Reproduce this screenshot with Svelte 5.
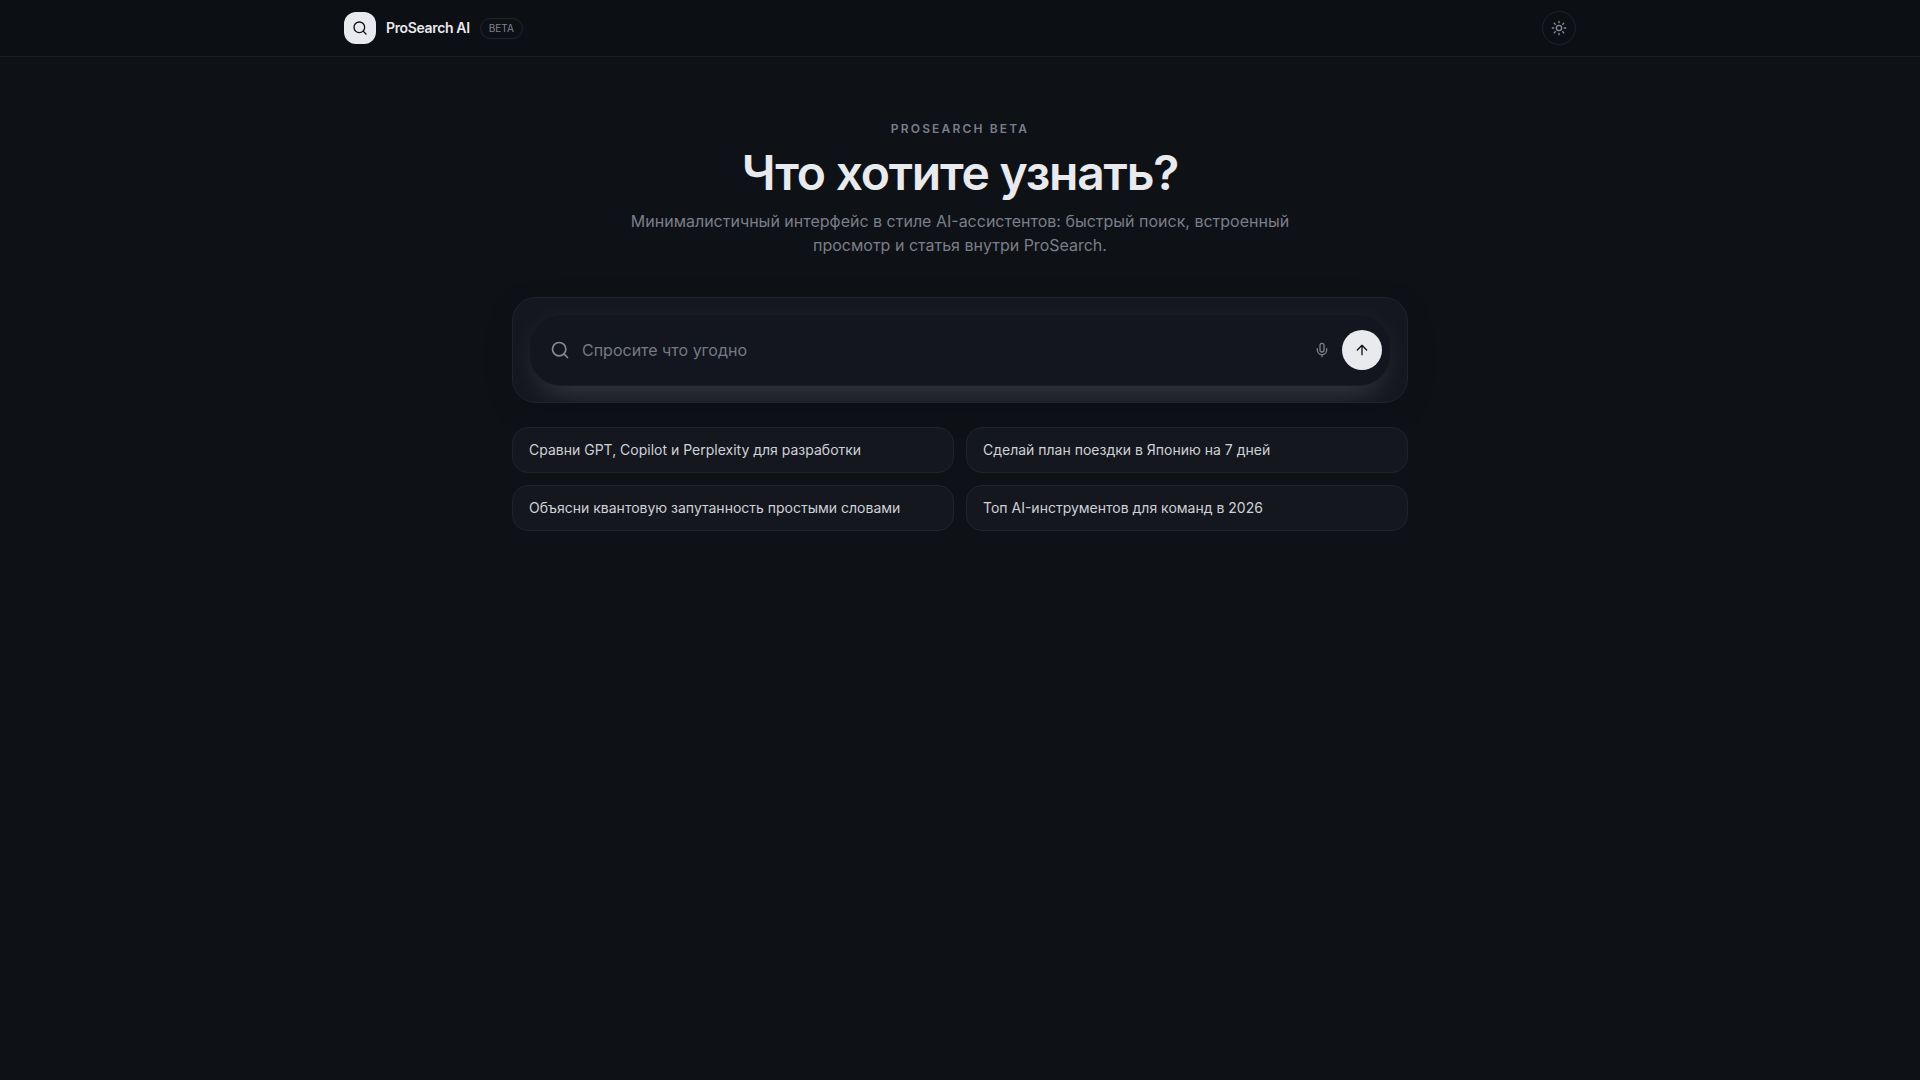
<script>
  let query = $state('');

  const suggestions = [
    'Сравни GPT, Copilot и Perplexity для разработки',
    'Сделай план поездки в Японию на 7 дней',
    'Объясни квантовую запутанность простыми словами',
    'Топ AI-инструментов для команд в 2026'
  ];
</script>

<div class="page">
  <header class="topbar">
    <div class="topbar-inner">
      <a class="brand" href="/">
        <span class="logo">
          <svg width="16" height="16" viewBox="0 0 24 24" aria-hidden="true">
            <circle cx="11" cy="11" r="8" />
            <path d="m21 21-4.3-4.3" />
          </svg>
        </span>
        <span class="name">ProSearch AI</span>
        <span class="badge">BETA</span>
      </a>
      <button class="theme" type="button" aria-label="Сменить тему">
        <svg width="16" height="16" viewBox="0 0 24 24" aria-hidden="true">
          <circle cx="12" cy="12" r="4" />
          <path d="M12 2v2M12 20v2M4.93 4.93l1.41 1.41M17.66 17.66l1.41 1.41M2 12h2M20 12h2M6.34 17.66l-1.41 1.41M19.07 4.93l-1.41 1.41" />
        </svg>
      </button>
    </div>
  </header>

  <main>
    <section class="intro">
      <p class="eyebrow">PROSEARCH BETA</p>
      <h1>Что хотите узнать?</h1>
      <p class="lead">
        Минималистичный интерфейс в стиле AI-ассистентов: быстрый поиск, встроенный просмотр и статья внутри ProSearch.
      </p>
    </section>

    <div class="panel">
      <form class="search" onsubmit={(e) => e.preventDefault()}>
        <svg class="lens" width="20" height="20" viewBox="0 0 24 24" aria-hidden="true">
          <circle cx="11" cy="11" r="8" />
          <path d="m21 21-4.3-4.3" />
        </svg>
        <input type="text" aria-label="Поисковый запрос" placeholder="Спросите что угодно" bind:value={query} />
        <button class="mic" type="button" aria-label="Голосовой ввод">
          <svg width="16" height="16" viewBox="0 0 24 24" aria-hidden="true">
            <rect x="9" y="2" width="6" height="13" rx="3" />
            <path d="M19 10v2a7 7 0 0 1-14 0v-2M12 19v3" />
          </svg>
        </button>
        <button class="send" type="submit" aria-label="Найти">
          <svg width="16" height="16" viewBox="0 0 24 24" aria-hidden="true">
            <path d="m5 12 7-7 7 7M12 19V5" />
          </svg>
        </button>
      </form>
    </div>

    <div class="suggestions">
      {#each suggestions as text}
        <button type="button" onclick={() => (query = text)}>{text}</button>
      {/each}
    </div>
  </main>
</div>

<style>
  :global(body) {
    background: #0e1116;
  }

  .page {
    min-height: 100vh;
    background: #0e1116;
    color: #e8eaee;
    font-family: Inter, 'Liberation Sans', sans-serif;
    font-size: 16px;
    line-height: 24px;
  }

  .page :global(*) {
    box-sizing: border-box;
  }

  svg {
    display: block;
    flex: none;
    fill: none;
    stroke: currentColor;
    stroke-width: 2;
    stroke-linecap: round;
    stroke-linejoin: round;
  }

  button {
    margin: 0;
    padding: 0;
    font: inherit;
    color: inherit;
    background: none;
    border: 0;
    cursor: pointer;
  }

  .topbar {
    background: #0c0f14;
    border-bottom: 1px solid #1a1d22;
  }

  .topbar-inner {
    display: flex;
    align-items: center;
    justify-content: space-between;
    max-width: 1280px;
    height: 56px;
    margin: 0 auto;
    padding: 0 24px;
  }

  .brand {
    display: flex;
    align-items: center;
    color: inherit;
    text-decoration: none;
  }

  .logo {
    display: grid;
    place-items: center;
    width: 32px;
    height: 32px;
    margin-right: 10px;
    color: #0e1116;
    background: #e8eaee;
    border-radius: 12px;
  }

  .name {
    margin-right: 10px;
    font-size: 14px;
    font-weight: 600;
    line-height: 20px;
    letter-spacing: -0.025em;
  }

  .badge {
    padding: 2px 8px;
    color: #80838f;
    font-size: 10px;
    line-height: 15px;
    border: 1px solid #22252c;
    border-radius: 12px;
  }

  .theme {
    display: grid;
    place-items: center;
    width: 34px;
    height: 34px;
    color: #8a8d9b;
    border: 1px solid #202329;
    border-radius: 50%;
  }

  main {
    max-width: 944px;
    margin: 0 auto;
    padding: 64px 24px;
  }

  .intro {
    display: flex;
    flex-direction: column;
    align-items: center;
    text-align: center;
  }

  .eyebrow {
    margin: 0;
    color: #7b7e8a;
    font-size: 12px;
    font-weight: 600;
    line-height: 16px;
    letter-spacing: 0.18em;
  }

  h1 {
    margin: 12px 0;
    font-size: 48px;
    font-weight: 600;
    line-height: 48px;
    letter-spacing: -0.025em;
  }

  .lead {
    max-width: 672px;
    margin: 0;
    color: #7b7e8a;
  }

  .panel {
    margin-top: 40px;
    padding: 16px;
    overflow: hidden;
    background: #14171e;
    border: 1px solid #202329;
    border-radius: 24px;
    box-shadow: 0 8px 30px rgba(0, 0, 0, 0.12);
  }

  .search {
    display: flex;
    align-items: center;
    height: 72px;
    padding: 0 8px 0 20px;
    background: #13161e;
    border: 1px solid #191c23;
    border-radius: 32px;
    box-shadow:
      0 4px 28px rgba(255, 255, 255, 0.05),
      0 22px 36px -16px rgba(255, 255, 255, 0.13);
  }

  .lens {
    color: #868995;
  }

  input {
    flex: 1;
    min-width: 0;
    margin: 0 12px;
    padding: 0;
    color: inherit;
    font: inherit;
    background: none;
    border: 0;
    outline: 0;
  }

  input::placeholder {
    color: #767983;
    opacity: 1;
  }

  .mic {
    display: grid;
    place-items: center;
    width: 40px;
    height: 40px;
    color: #7b7e8a;
  }

  .send {
    display: grid;
    place-items: center;
    width: 40px;
    height: 40px;
    color: #0e1116;
    background: #e8eaee;
    border-radius: 50%;
  }

  .suggestions {
    display: grid;
    grid-template-columns: 1fr 1fr;
    gap: 12px;
    margin-top: 24px;
  }

  .suggestions button {
    padding: 12px 16px;
    color: #cfd1d6;
    font-size: 14px;
    line-height: 20px;
    text-align: left;
    background: #14171e;
    border: 1px solid #202329;
    border-radius: 16px;
  }

  @media (max-width: 640px) {
    .suggestions {
      grid-template-columns: 1fr;
    }
  }
</style>
